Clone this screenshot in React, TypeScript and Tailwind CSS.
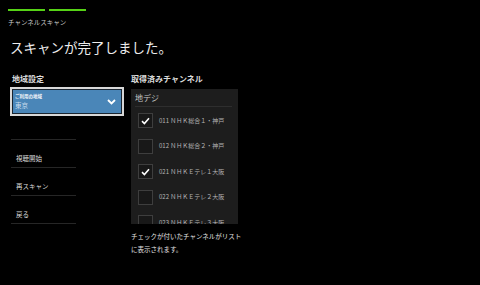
import React from "react";

interface Channel {
  no: string;
  name: string;
  checked: boolean;
}

const channels: Channel[] = [
  { no: "011", name: "ＮＨＫ総合１・神戸", checked: true },
  { no: "012", name: "ＮＨＫ総合２・神戸", checked: false },
  { no: "021", name: "ＮＨＫＥテレ１大阪", checked: true },
  { no: "022", name: "ＮＨＫＥテレ２大阪", checked: false },
  { no: "023", name: "ＮＨＫＥテレ３大阪", checked: false },
];

const menuItems = ["視聴開始", "再スキャン", "戻る"];

const Check: React.FC = () => (
  <svg width="9" height="8" viewBox="0 0 9 8" fill="none">
    <path d="M1 4.2 L3.4 6.5 L8 1.3" stroke="#ffffff" strokeWidth="1.6" />
  </svg>
);

const App: React.FC = () => {
  return (
    <div
      className="w-[480px] h-[285px] bg-black overflow-hidden text-[#e6e6e6]"
      style={{ fontFamily: '"Noto Sans CJK JP", "Noto Sans", sans-serif' }}
    >
      <div className="flex gap-[4px] pl-[8px] pt-[9px]">
        <div className="w-[37px] h-[2px] bg-[#56d216]" />
        <div className="w-[37px] h-[2px] bg-[#56d216]" />
      </div>
      <div className="pl-[8px] pt-[6px] text-[6.5px] leading-[10px] text-[#c8c8c8]">
        チャンネルスキャン
      </div>
      <div className="pl-[10px] pt-[11px] text-[13.5px] leading-[18px] text-[#ececec]">
        スキャンが完了しました。
      </div>

      <div className="flex pt-[18px]">
        <div className="w-[131px] shrink-0 pl-[10px]">
          <div className="pl-[2px] text-[8px] leading-[10px] font-bold text-[#dcdcdc]">
            地域設定
          </div>
          <div className="mt-[3px] w-[114px] h-[29px] border-2 border-[#d8d8d8] p-[1px] bg-[#1a2530]">
            <div className="h-full bg-[#4a86b8] flex items-center justify-between pl-[2px] pr-[5px]">
              <div className="flex flex-col">
                <span className="text-[4.5px] leading-[7px] font-bold text-[#f0f4f8]">
                  ご利用の地域
                </span>
                <span className="text-[6.5px] leading-[10px] text-[#c9dced]">東京</span>
              </div>
              <svg width="9" height="6" viewBox="0 0 9 6" fill="none">
                <path d="M1 1 L4.5 4.5 L8 1" stroke="#ffffff" strokeWidth="1.8" />
              </svg>
            </div>
          </div>
          <div className="ml-[1px] w-[65px] mt-[23px] border-b border-[#262626]" />
          {menuItems.map((item) => (
            <div
              key={item}
              className="ml-[1px] w-[65px] h-[28px] border-b border-[#262626] flex items-end pl-[5px] pb-[4px] text-[6.5px] leading-[10px] text-[#dcdcdc]"
            >
              {item}
            </div>
          ))}
        </div>

        <div className="w-[107px] shrink-0">
          <div className="text-[8px] leading-[10px] font-bold text-[#dcdcdc]">
            取得済みチャンネル
          </div>
          <div className="mt-[5px] h-[135px] bg-[#1d1d1d] overflow-hidden pl-[4px] pr-[6px]">
            <div className="pt-[3px] pb-[2px] text-[8px] leading-[12px] text-[#c4c4c4] border-b border-[#2e2e2e]">
              地デジ
            </div>
            <div className="pt-[6px] flex flex-col gap-[10.5px]">
              {channels.map((ch) => (
                <div key={ch.no} className="flex items-center pl-[3px]">
                  <div className="w-[15px] h-[15px] shrink-0 border-[1.5px] border-[#3e3e3e] bg-[#181818] flex items-center justify-center">
                    {ch.checked && <Check />}
                  </div>
                  <span className="ml-[6px] whitespace-nowrap text-[6px] leading-[8px] text-[#b4b4b4]">
                    {ch.no} {ch.name}
                  </span>
                </div>
              ))}
            </div>
          </div>
          <div className="pt-[6px] w-[120px] text-[6.5px] leading-[13px] text-[#e0e0e0]">
            チェックが付いたチャンネルがリスト
            <br />
            に表示されます。
          </div>
        </div>
      </div>
    </div>
  );
};

export default App;
